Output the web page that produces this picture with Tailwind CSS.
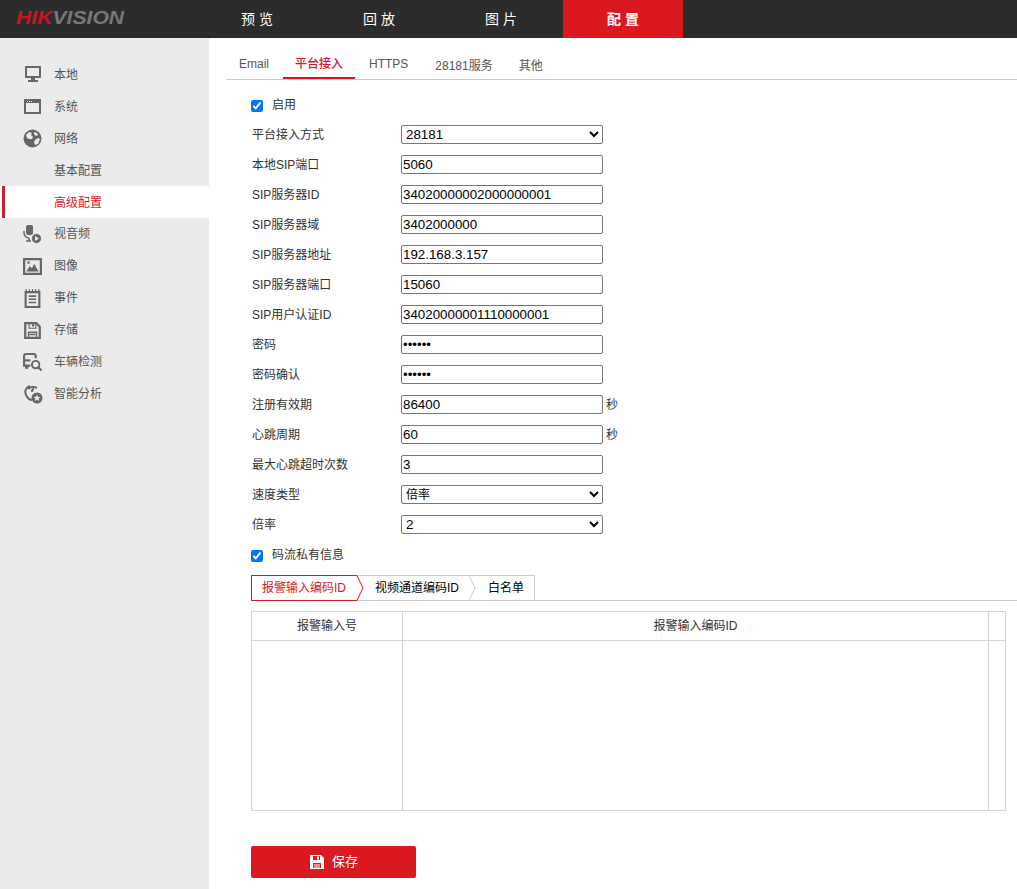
<!DOCTYPE html>
<html lang="zh-CN">
<head>
    <meta charset="UTF-8" />
    <title>配置</title>
    <script src="https://cdn.jsdelivr.net/npm/@tailwindcss/browser@4"></script>
</head>
<body class="h-[889px] w-[1017px] overflow-hidden bg-white font-['Liberation_Sans','Noto_Sans_CJK_SC',sans-serif] text-xs text-[#333]">
    <!-- top bar -->
    <header class="flex h-[38px] bg-[#2c2c2c]">
        <div class="w-[197px] pl-4 pt-[6px] text-[18px] leading-6 font-bold italic"><span class="inline-block origin-left scale-x-[1.175]"><span class="text-[#c8161d]">HIK</span><span class="text-[#77787b]">VISION</span></span></div>
        <nav class="flex gap-[2px] text-sm text-white">
            <a class="flex w-[120px] items-center justify-center pl-[4px] tracking-[4px]">预览</a>
            <a class="flex w-[120px] items-center justify-center pl-[4px] tracking-[4px]">回放</a>
            <a class="flex w-[120px] items-center justify-center pl-[4px] tracking-[4px]">图片</a>
            <a class="flex w-[120px] items-center justify-center bg-[#da1820] pl-[4px] font-bold tracking-[4px]">配置</a>
        </nav>
    </header>

    <div class="flex h-[851px]">
        <!-- sidebar -->
        <aside class="w-[209px] shrink-0 bg-[#ebebeb] pt-5 text-[#555]">
            <a class="flex h-8 items-center gap-[12px] pl-[24px]">
                <svg class="size-[18px]" viewBox="0 0 18 18" fill="#666"><path fill-rule="evenodd" d="M2 1h14a1 1 0 0 1 1 1v10a1 1 0 0 1-1 1H2a1 1 0 0 1-1-1V2a1 1 0 0 1 1-1zm1 2v8h12V3z"/><path d="M7 13h4v2h3v2H4v-2h3z"/></svg>
                <span class="relative top-[1px]">本地</span>
            </a>
            <a class="flex h-8 items-center gap-[12px] pl-[24px]">
                <svg class="size-[18px]" viewBox="0 0 18 18" fill="#666"><path fill-rule="evenodd" d="M0 2h17v15H0zm2 4v9h13V6zm1-2v1h1V4zm2 0v1h1V4zm2 0v1h1V4z"/></svg>
                <span class="relative top-[1px]">系统</span>
            </a>
            <a class="flex h-8 items-center gap-[12px] pl-[23px]">
                <svg class="size-[19px]" viewBox="0 0 19 19"><circle cx="9.500" cy="9.500" r="9" fill="#666"/><path fill="#ebebeb" d="M3 6l3-3 3 1-1 2 2 2-1 2H6L4 9zm9 5l3-2 2 1-2 5-3 1-1-3zM11 3l3 1 1 2-2 1-2-2z"/></svg>
                <span class="relative top-[1px]">网络</span>
            </a>
            <a class="flex h-8 items-center pl-[54px]"><span class="relative top-[1px]">基本配置</span></a>
            <a class="relative flex h-8 items-center bg-white pl-[54px] text-[#d7191f]">
                <span class="absolute top-0 left-[2px] h-full w-[3px] bg-[#c9202c]"></span>
                <span class="relative top-[1px]">高级配置</span>
            </a>
            <a class="flex h-8 items-center gap-[12px] pl-[23px]">
                <svg class="size-[19px]" viewBox="0 0 19 19" fill="#666"><path d="M5 0h3a2 2 0 0 1 2 2v6a2 2 0 0 1-2 2H5a2 2 0 0 1-2-2V2a2 2 0 0 1 2-2z"/><path fill="none" stroke="#666" stroke-width="1.500" d="M1 6v2a5 5 0 0 0 5 5M6 13v3M3 16h5"/><circle cx="13.500" cy="13.500" r="5" fill="#666" stroke="#ebebeb"/><path fill="#ebebeb" d="M12 11l4 2.500-4 2.500z"/></svg>
                <span>视音频</span>
            </a>
            <a class="flex h-8 items-center gap-[12px] pl-[23px]">
                <svg class="size-[19px]" viewBox="0 0 17 17" fill="#666"><path fill-rule="evenodd" d="M0 1h17v15H0zm2 2v11h13V3z"/><path d="M3 13l3-5 2 2 2-4 4 7zM4 4h2v2H4z"/></svg>
                <span>图像</span>
            </a>
            <a class="flex h-8 items-center gap-[12px] pl-[23px]">
                <svg class="size-[19px]" viewBox="0 0 17 18" fill="#666"><path fill-rule="evenodd" d="M1 2h15v16H1zm2 2v12h11V4z"/><path d="M2 0h1v2H2zm3 0h1v2H5zm3 0h1v2H8zm3 0h1v2h-1zm3 0h1v2h-1zM5 6h7v1.500H5zm0 3h7v1.500H5zm0 3h7v1.500H5z"/></svg>
                <span>事件</span>
            </a>
            <a class="flex h-8 items-center gap-[12px] pl-[23px]">
                <svg class="size-[19px]" viewBox="0 0 17 17"><path fill="none" stroke="#666" stroke-width="2" d="M2 2h10l3 3v10H2z"/><path fill="#666" d="M5 2h1v4h5V2h1v5H5zM8 3h2v2H8z"/><path fill="none" stroke="#666" stroke-width="1.300" d="M5 14v-4h7v4M6 12h5"/></svg>
                <span>存储</span>
            </a>
            <a class="flex h-8 items-center gap-[12px] pl-[23px]">
                <svg class="size-[19px]" viewBox="0 0 18 18"><path fill="none" stroke="#666" stroke-width="2" d="M7 12H1V3a2 2 0 0 1 2-2h7a2 2 0 0 1 2 2v2M1 7h6"/><path fill="#666" d="M2 12h3v3H2z"/><circle cx="12" cy="11" r="3.500" fill="none" stroke="#666" stroke-width="1.800"/><path stroke="#666" stroke-width="2" d="M14.500 13.500l3 3"/></svg>
                <span>车辆检测</span>
            </a>
            <a class="flex h-8 items-center gap-[11px] pl-[23px]">
                <svg class="size-[20px]" viewBox="0 0 20 20"><path fill="none" stroke="#666" stroke-width="2" d="M7 2C3 3 1 7 3 11s5 5 6 5M5 5c2-2 6-3 9-1M9 8c0-2 1-3 2-3"/><circle cx="14" cy="14" r="5.500" fill="#666"/><path fill="#ebebeb" d="M14 10.500l1 2.300 2.500.2-1.900 1.600.6 2.400-2.200-1.300-2.200 1.300.6-2.400-1.900-1.600 2.500-.2z"/></svg>
                <span>智能分析</span>
            </a>
        </aside>

        <main class="min-w-0 flex-1">
            <!-- tabs -->
            <div class="ml-[17px] flex h-[42px] border-b border-[#ccc] text-[#555]">
                <a class="flex h-[41px] w-[57px] items-start pt-[19px] pl-[13px] leading-[14px]">Email</a>
                <a class="flex h-[41px] w-[72px] items-start justify-center border-b-2 border-[#d7191f] pt-[19px] leading-[14px] font-medium text-[#d7191f]">平台接入</a>
                <a class="ml-[14px] flex items-start pt-[19px] leading-[14px]">HTTPS</a>
                <a class="ml-[27px] flex items-start pt-[21px] leading-[14px]">28181服务</a>
                <a class="ml-[26px] flex items-start pt-[21px] leading-[14px]">其他</a>
            </div>

            <form class="ml-[42px] pt-[10px]">
                <label class="flex h-[30px] items-center gap-[9px]"><input type="checkbox" checked class="relative top-[1px] m-0 size-3" /><span>启用</span></label>
                <div class="flex h-[30px] items-center">
                    <span class="ml-[1px] w-[149px]">平台接入方式</span>
                    <select class="mb-[1px] h-[19px] w-[202px] rounded-[2px] border border-[#767676] text-[13.33px] text-black"><option>28181</option></select>
                </div>
                <div class="flex h-[30px] items-center">
                    <span class="ml-[1px] w-[149px]">本地SIP端口</span>
                    <input value="5060" class="mb-[1px] h-[19px] w-[202px] rounded-[2px] border border-[#767676] px-[1px] text-[13.33px] text-black" />
                </div>
                <div class="flex h-[30px] items-center">
                    <span class="ml-[1px] w-[149px]">SIP服务器ID</span>
                    <input value="34020000002000000001" class="mb-[1px] h-[19px] w-[202px] rounded-[2px] border border-[#767676] px-[1px] text-[13.33px] text-black" />
                </div>
                <div class="flex h-[30px] items-center">
                    <span class="ml-[1px] w-[149px]">SIP服务器域</span>
                    <input value="3402000000" class="mb-[1px] h-[19px] w-[202px] rounded-[2px] border border-[#767676] px-[1px] text-[13.33px] text-black" />
                </div>
                <div class="flex h-[30px] items-center">
                    <span class="ml-[1px] w-[149px]">SIP服务器地址</span>
                    <input value="192.168.3.157" class="mb-[1px] h-[19px] w-[202px] rounded-[2px] border border-[#767676] px-[1px] text-[13.33px] text-black" />
                </div>
                <div class="flex h-[30px] items-center">
                    <span class="ml-[1px] w-[149px]">SIP服务器端口</span>
                    <input value="15060" class="mb-[1px] h-[19px] w-[202px] rounded-[2px] border border-[#767676] px-[1px] text-[13.33px] text-black" />
                </div>
                <div class="flex h-[30px] items-center">
                    <span class="ml-[1px] w-[149px]">SIP用户认证ID</span>
                    <input value="34020000001110000001" class="mb-[1px] h-[19px] w-[202px] rounded-[2px] border border-[#767676] px-[1px] text-[13.33px] text-black" />
                </div>
                <div class="flex h-[30px] items-center">
                    <span class="ml-[1px] w-[149px]">密码</span>
                    <input type="password" value="123456" class="mb-[1px] h-[19px] w-[202px] rounded-[2px] border border-[#767676] px-[1px] text-[13.33px] text-black" />
                </div>
                <div class="flex h-[30px] items-center">
                    <span class="ml-[1px] w-[149px]">密码确认</span>
                    <input type="password" value="123456" class="mb-[1px] h-[19px] w-[202px] rounded-[2px] border border-[#767676] px-[1px] text-[13.33px] text-black" />
                </div>
                <div class="flex h-[30px] items-center">
                    <span class="ml-[1px] w-[149px]">注册有效期</span>
                    <input value="86400" class="mb-[1px] h-[19px] w-[202px] rounded-[2px] border border-[#767676] px-[1px] text-[13.33px] text-black" />
                    <span class="ml-[3px]">秒</span>
                </div>
                <div class="flex h-[30px] items-center">
                    <span class="ml-[1px] w-[149px]">心跳周期</span>
                    <input value="60" class="mb-[1px] h-[19px] w-[202px] rounded-[2px] border border-[#767676] px-[1px] text-[13.33px] text-black" />
                    <span class="ml-[3px]">秒</span>
                </div>
                <div class="flex h-[30px] items-center">
                    <span class="ml-[1px] w-[149px]">最大心跳超时次数</span>
                    <input value="3" class="mb-[1px] h-[19px] w-[202px] rounded-[2px] border border-[#767676] px-[1px] text-[13.33px] text-black" />
                </div>
                <div class="flex h-[30px] items-center">
                    <span class="ml-[1px] w-[149px]">速度类型</span>
                    <select class="mb-[1px] h-[19px] w-[202px] rounded-[2px] border border-[#767676] text-xs text-black"><option>倍率</option></select>
                </div>
                <div class="flex h-[30px] items-center">
                    <span class="ml-[1px] w-[149px]">倍率</span>
                    <select class="mb-[1px] h-[19px] w-[202px] rounded-[2px] border border-[#767676] text-[13.33px] text-black"><option>2</option></select>
                </div>
                <label class="flex h-[30px] items-center gap-[9px]"><input type="checkbox" checked class="relative top-[1px] m-0 size-3" /><span>码流私有信息</span></label>

                <!-- sub tabs -->
                <div class="mt-[5px] flex h-[26px] border-b border-[#ccc] text-black">
                    <a class="relative flex h-[26px] w-[106px] items-center border-y border-l border-[#d7191f] pl-[10px] text-[#d7191f]">
                        报警输入编码ID
                        <svg class="absolute top-[-1px] left-[104px] z-10 h-[26px] w-[8px]" viewBox="0 0 8 26"><path d="M0 0.500h1l6 12.500-6 12.500H0" fill="#fff" stroke="#d7191f"/></svg>
                    </a>
                    <a class="relative flex h-[25px] w-[113px] items-center border-t border-[#ccc] pl-[18px]">
                        视频通道编码ID
                        <svg class="absolute top-[-1px] left-[111px] z-10 h-[26px] w-[8px]" viewBox="0 0 8 26"><path d="M0 0.500h1l6 12.500-6 12.500H0" fill="#fff" stroke="#ccc"/></svg>
                    </a>
                    <a class="flex h-[25px] w-[65px] items-center border-t border-r border-[#ccc] pl-[18px]">白名单</a>
                </div>

                <!-- table -->
                <div class="mt-[10px] grid h-[200px] w-[755px] grid-cols-[151px_586px_1fr] grid-rows-[29px_1fr] border border-[#d4d4d4] text-[#333]">
                    <div class="flex items-center justify-center border-r border-b border-[#d4d4d4]">报警输入号</div>
                    <div class="flex items-center justify-center border-r border-b border-[#d4d4d4]">报警输入编码ID</div>
                    <div class="border-b border-[#d4d4d4]"></div>
                    <div class="border-r border-[#d4d4d4]"></div>
                    <div class="border-r border-[#d4d4d4]"></div>
                    <div></div>
                </div>

                <button type="button" class="mt-[35px] flex h-8 w-[165px] items-center justify-center gap-[8px] rounded-[2px] bg-[#da1a20] pl-[1px] text-[13px] text-white">
                    <svg class="size-[14px]" viewBox="0 0 14 14" fill="#fff"><path fill-rule="evenodd" d="M0 0h11l3 3v11H0zm3 1v4h7V1zM3 8v5h8V8z"/><path d="M7 1.500h2v3H7zM4 9.500h6v1H4zM4 11.500h6v1H4z"/></svg>
                    保存
                </button>
            </form>
        </main>
    </div>
</body>
</html>
